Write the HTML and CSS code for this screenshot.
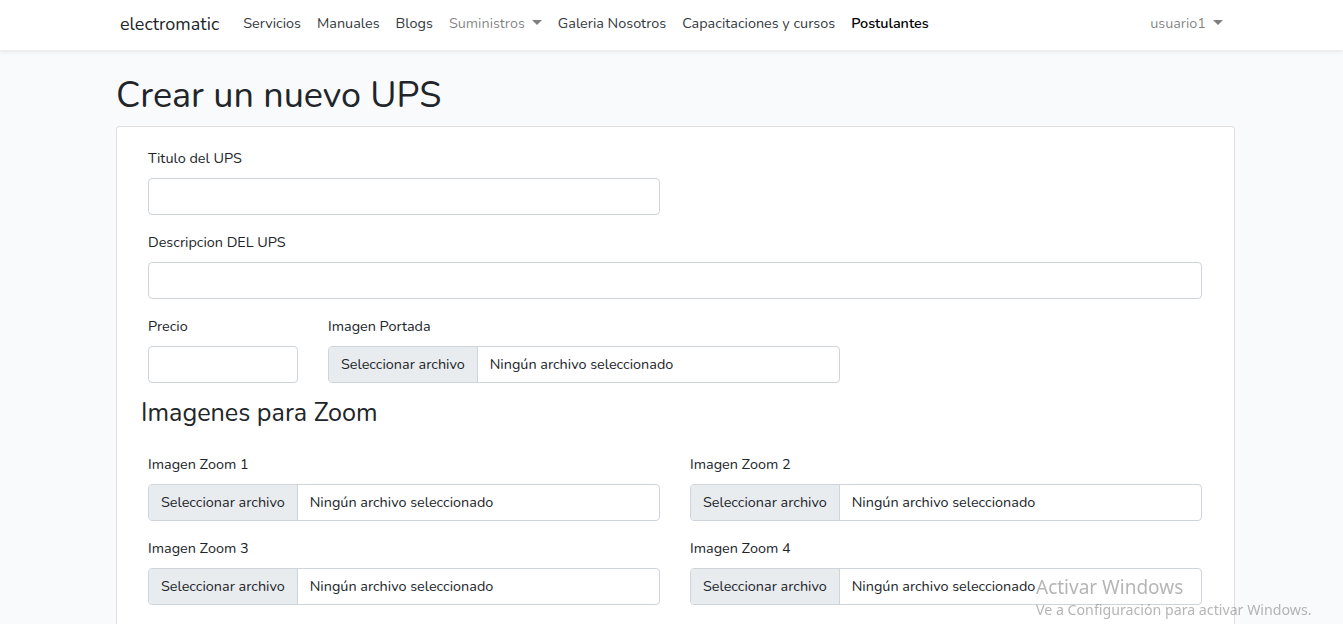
FILE: index.html
```html
<!DOCTYPE html>
<html lang="es">
<head>
<meta charset="utf-8">
<title>Crear un nuevo UPS</title>
<link rel="stylesheet" href="styles.css">
</head>
<body>
<nav class="navbar">
  <div class="nav-inner">
    <a class="brand" href="#">electromatic</a>
    <ul class="nav-links">
      <li><a class="nav-link dark" href="#">Servicios</a></li>
      <li><a class="nav-link dark" href="#">Manuales</a></li>
      <li><a class="nav-link dark" href="#">Blogs</a></li>
      <li><a class="nav-link muted caret" href="#">Suministros</a></li>
      <li><a class="nav-link dark" href="#">Galeria Nosotros</a></li>
      <li><a class="nav-link dark" href="#">Capacitaciones y cursos</a></li>
      <li><a class="nav-link bold" href="#">Postulantes</a></li>
    </ul>
    <div class="nav-right">
      <a class="nav-link muted caret" href="#">usuario1</a>
    </div>
  </div>
</nav>

<main class="container">
  <h1 class="page-title">Crear un nuevo UPS</h1>
  <div class="card">
    <div class="card-body">
      <div class="row">
        <div class="field col-6">
          <label>Titulo del UPS</label>
          <div class="input"></div>
        </div>
      </div>
      <div class="row">
        <div class="field col-12">
          <label>Descripcion DEL UPS</label>
          <div class="input"></div>
        </div>
      </div>
      <div class="row">
        <div class="field col-2">
          <label>Precio</label>
          <div class="input"></div>
        </div>
        <div class="field col-6">
          <label>Imagen Portada</label>
          <div class="file"><span class="file-btn">Seleccionar archivo</span><span class="file-name">Ningún archivo seleccionado</span></div>
        </div>
      </div>
      <h3 class="section-title">Imagenes para Zoom</h3>
      <div class="row">
        <div class="field col-6">
          <label>Imagen Zoom 1</label>
          <div class="file"><span class="file-btn">Seleccionar archivo</span><span class="file-name">Ningún archivo seleccionado</span></div>
        </div>
        <div class="field col-6">
          <label>Imagen Zoom 2</label>
          <div class="file"><span class="file-btn">Seleccionar archivo</span><span class="file-name">Ningún archivo seleccionado</span></div>
        </div>
      </div>
      <div class="row">
        <div class="field col-6">
          <label>Imagen Zoom 3</label>
          <div class="file"><span class="file-btn">Seleccionar archivo</span><span class="file-name">Ningún archivo seleccionado</span></div>
        </div>
        <div class="field col-6">
          <label>Imagen Zoom 4</label>
          <div class="file"><span class="file-btn">Seleccionar archivo</span><span class="file-name">Ningún archivo seleccionado</span></div>
        </div>
      </div>
    </div>
  </div>
</main>

<div class="watermark">
  <div class="wm-title">Activar Windows</div>
  <div class="wm-sub">Ve a Configuración para activar Windows.</div>
</div>
</body>
</html>
```

FILE: styles.css
```css
* { box-sizing: border-box; }
html, body { margin: 0; padding: 0; }
body {
  background: #f8fafc;
  color: #212529;
  font-family: "Nunito", "Open Sans", "Noto Sans", sans-serif;
  font-size: 14.4px;
  line-height: 1.6;
  overflow: hidden;
  height: 624px;
}
a { text-decoration: none; }

.navbar {
  background: #fff;
  box-shadow: 0 .125rem .25rem rgba(0,0,0,.075);
  height: 50px;
}
.nav-inner {
  width: 1141px;
  margin: 0 auto;
  height: 50px;
  display: flex;
  align-items: center;
  padding: 0 11px 2px 19px;
}
.brand {
  font-size: 18px;
  color: #212529;
  margin-right: 16px;
}
.nav-links {
  list-style: none;
  margin: 0;
  padding: 0;
  display: flex;
  flex: 1;
}
.nav-link {
  display: block;
  padding: 8px 8px;
}
.nav-link.dark { color: #343a40; }
.nav-link.muted { color: rgba(0,0,0,.5); }
.nav-link.bold { color: #000; font-weight: 600; }
.caret::after {
  content: "";
  display: inline-block;
  margin-left: 7px;
  vertical-align: 3px;
  border-top: 5px solid;
  border-left: 5px solid transparent;
  border-right: 5px solid transparent;
}

.container {
  width: 1141px;
  margin: 0 auto;
  padding: 0 0 0 15px;
}
.page-title {
  font-size: 36px;
  font-weight: 400;
  line-height: 1.2;
  margin: 24px 0 9px 0;
}
.card {
  width: 1119px;
  background: #fff;
  border: 1px solid rgba(0,0,0,.125);
  border-radius: 4px;
  height: 520px;
}
.card-body {
  padding: 20px 32px 0 31px;
}
.row {
  display: flex;
  gap: 30px;
}
.col-12 { width: 1054px; }
.col-6 { width: 512px; }
.col-2 { width: 150px; }
.field { margin-bottom: 16px; }
.field label {
  display: block;
  margin-bottom: 8px;
  line-height: 23px;
}
.input {
  height: 37px;
  border: 1px solid #ced4da;
  border-radius: 4px;
  background: #fff;
}
.file {
  height: 37px;
  border: 1px solid #ced4da;
  border-radius: 4px;
  background: #fff;
  display: flex;
  overflow: hidden;
  line-height: 35px;
  white-space: nowrap;
}
.file-btn {
  background: #e9ecef;
  border-right: 1px solid #ced4da;
  padding: 0 12px;
  color: #212529;
}
.file-name {
  padding: 0 12px;
  color: #212529;
}
.section-title {
  font-size: 25.2px;
  font-weight: 400;
  line-height: 1.15;
  margin: 0 0 25px -7px;
}

.watermark {
  position: fixed;
  left: 1036px;
  top: 574px;
  color: rgba(120,120,120,.55);
  font-family: "Noto Sans", "Open Sans", sans-serif;
  pointer-events: none;
}
.wm-title { font-size: 19px; line-height: 26px; }
.wm-sub { font-size: 14.2px; line-height: 18px; margin-top: 1px; }
```
